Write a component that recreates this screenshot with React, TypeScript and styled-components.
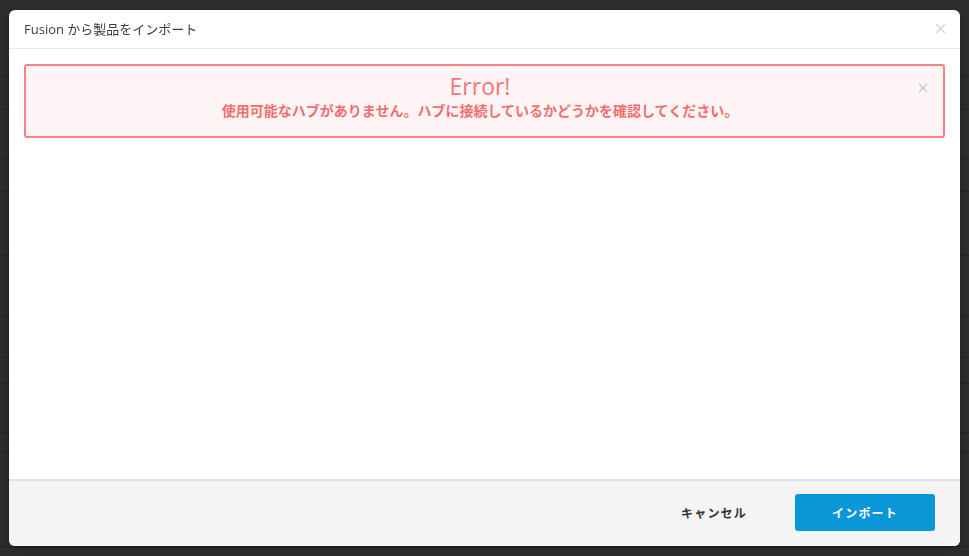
import React from "react";
import styled, { createGlobalStyle } from "styled-components";

const Global = createGlobalStyle`
  html, body { margin: 0; padding: 0; background: #2e2e2e; }
  body { font-family: "Open Sans", "Noto Sans CJK JP", sans-serif; overflow: hidden; }
  * { box-sizing: border-box; }
`;

const Backdrop = styled.div`
  height: 556px;
  display: flex;
  flex-direction: column;
  background: #2e2e2e;
`;

const BgRow = styled.div<{ $h: number; $line?: string }>`
  height: ${(p) => p.$h}px;
  flex: none;
  border-bottom: 1px solid ${(p) => p.$line ?? "#252525"};
`;

const Modal = styled.div`
  position: fixed;
  left: 9px;
  top: 10px;
  width: 951px;
  height: 536px;
  background: #fff;
  border-radius: 6px;
  display: flex;
  flex-direction: column;
  overflow: hidden;
  box-shadow: 0 2px 8px rgba(0, 0, 0, 0.4);
`;

const Header = styled.div`
  height: 39px;
  flex: none;
  display: flex;
  align-items: center;
  justify-content: space-between;
  padding: 0 14px 2px 15px;
  border-bottom: 1px solid #e8e8e8;
`;

const Title = styled.div`
  font-size: 13px;
  color: #3c3c3c;
`;

const CloseX = styled.button<{ $color: string }>`
  border: none;
  background: none;
  padding: 0;
  width: 12px;
  height: 12px;
  display: flex;
  align-items: center;
  justify-content: center;
  cursor: pointer;
  color: ${(p) => p.$color};
`;

const Body = styled.div`
  flex: 1;
  padding: 15px;
`;

const Alert = styled.div`
  position: relative;
  height: 74px;
  border: 2px solid #f88181;
  border-radius: 3px;
  background: #fdf5f5;
  display: flex;
  flex-direction: column;
  align-items: center;
  padding: 6px 9px 0 0;
`;

const AlertTitle = styled.div`
  font-size: 23px;
  line-height: 28px;
  color: #f47777;
`;

const AlertMsg = styled.div`
  font-size: 14px;
  line-height: 20px;
  font-weight: bold;
  color: #f06e6e;
  font-family: "Noto Sans CJK JP", sans-serif;
`;

const AlertClose = styled.div`
  position: absolute;
  right: 14px;
  top: 16px;
`;

const Footer = styled.div`
  height: 67px;
  flex: none;
  background: #f4f4f4;
  border-top: 2px solid #e0e0e0;
  display: flex;
  justify-content: flex-end;
  align-items: flex-start;
  gap: 11px;
  padding: 13px 25px 0 0;
`;

const Button = styled.button<{ $primary?: boolean }>`
  width: 140px;
  height: 37px;
  border: none;
  border-radius: 3px;
  background: ${(p) => (p.$primary ? "#0997d8" : "transparent")};
  color: ${(p) => (p.$primary ? "#fff" : "#333")};
  font-family: "Noto Sans CJK JP", sans-serif;
  font-size: 12px;
  font-weight: bold;
  letter-spacing: 1.2px;
  cursor: pointer;
`;

const XIcon = ({ size = 10 }: { size?: number }) => (
  <svg width={size} height={size} viewBox="0 0 10 10">
    <path d="M1 1L9 9M9 1L1 9" stroke="currentColor" strokeWidth="1.2" fill="none" />
  </svg>
);

const rows: Array<[number, string?]> = [
  [78], [34], [50], [34], [65], [61], [43], [27], [50], [21], [20, "#123a52"], [37, "#123a52"], [40],
];

export default function App() {
  return (
    <>
      <Global />
      <Backdrop>
        {rows.map(([h, c], i) => (
          <BgRow key={i} $h={h - 1} $line={c} />
        ))}
      </Backdrop>
      <Modal>
        <Header>
          <Title>Fusion から製品をインポート</Title>
          <CloseX $color="#cfcfcf">
            <XIcon size={11} />
          </CloseX>
        </Header>
        <Body>
          <Alert>
            <AlertTitle>Error!</AlertTitle>
            <AlertMsg>使用可能なハブがありません。ハブに接続しているかどうかを確認してください。</AlertMsg>
            <AlertClose>
              <CloseX $color="#c4c4c4">
                <XIcon size={10} />
              </CloseX>
            </AlertClose>
          </Alert>
        </Body>
        <Footer>
          <Button>キャンセル</Button>
          <Button $primary>インポート</Button>
        </Footer>
      </Modal>
    </>
  );
}
